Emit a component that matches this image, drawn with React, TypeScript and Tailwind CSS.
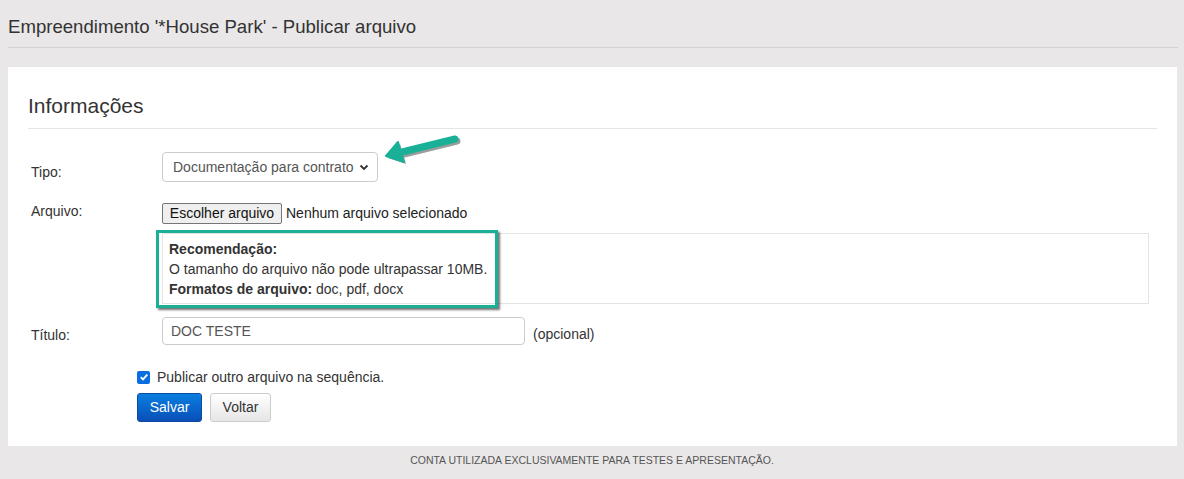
import React from "react";

const font = { fontFamily: '"Liberation Sans", Arial, sans-serif' };

function Row({ label, labelClass, children }: { label: string; labelClass?: string; children: React.ReactNode }) {
  return (
    <div className="flex">
      <div className={`w-[134px] shrink-0 pl-[3px] text-[14px] text-[#333] ${labelClass ?? ""}`}>{label}</div>
      <div className="flex-1 min-w-0">{children}</div>
    </div>
  );
}

function Arrow() {
  return (
    <svg className="absolute left-[380px] top-[128px]" width="90" height="45" viewBox="0 0 90 45">
      <g opacity="0.45" transform="translate(2 2)">
        <line x1="75" y1="11" x2="18" y2="25" stroke="#1f2b28" strokeWidth="7" strokeLinecap="round" />
        <polygon points="6,28 18,14 24,34" fill="#1f2b28" strokeLinejoin="round" />
      </g>
      <line x1="75" y1="11" x2="18" y2="25" stroke="#19b097" strokeWidth="7" strokeLinecap="round" />
      <polygon points="6,28 18,14 24,34" fill="#19b097" stroke="#19b097" strokeWidth="2" strokeLinejoin="round" />
    </svg>
  );
}

export default function App() {
  return (
    <div className="relative min-h-[479px] bg-[#e9e7e8] text-[#333]" style={font}>
      {/* Page title */}
      <div className="mx-2 mr-[6px] border-b border-[#d3d1d2] pt-[15px] pb-[8px]">
        <h1 className="text-[18.6px] leading-[24px] text-[#333]">Empreendimento '*House Park' - Publicar arquivo</h1>
      </div>

      {/* Panel */}
      <div className="ml-2 mr-[7px] mt-[19px] bg-white px-5 pt-[24px] pb-[24px]">
        <h2 className="border-b border-[#e5e5e5] pb-[7px] text-[21px] leading-[30px] text-[#333]">Informações</h2>

        <div className="mt-[23px]">
          <Row label="Tipo:" labelClass="pt-[10px]">
            <div className="flex h-[30px] w-[216px] items-center justify-between rounded-[4px] border border-[#ccc] bg-white pl-[10px] pr-[8px] text-[14px] text-[#555]">
              <span>Documentação para contrato</span>
              <svg width="10" height="10" viewBox="0 0 10 10">
                <path d="M1.5 3.5 L5 7 L8.5 3.5" fill="none" stroke="#333" strokeWidth="1.8" />
              </svg>
            </div>
          </Row>
        </div>

        <div className="mt-[20px]">
          <Row label="Arquivo:" labelClass="leading-[16px]">
            <div className="flex items-center gap-[4px] text-[14px] text-[#222]">
              <span className="flex h-[21px] w-[120px] items-center justify-center rounded-[2px] border border-[#767676] bg-[#efefef] text-[#111]">
                Escolher arquivo
              </span>
              <span>Nenhum arquivo selecionado</span>
            </div>
            <div className="relative mt-[9px] mr-[8px] border border-[#e3e3e3] px-[6px] pt-[5px] pb-[4px] text-[14px] leading-[20px] text-[#333]">
              <div className="font-bold">Recomendação:</div>
              <div>O tamanho do arquivo não pode ultrapassar 10MB.</div>
              <div>
                <span className="font-bold">Formatos de arquivo:</span> doc, pdf, docx
              </div>
              <div className="pointer-events-none absolute left-[-7px] top-[-4px] h-[78px] w-[342px] border-[3px] border-[#19b097] shadow-[2px_2px_2px_rgba(0,0,0,0.55)]" />
            </div>
          </Row>
        </div>

        <div className="mt-[13px]">
          <Row label="Título:" labelClass="pt-[8px]">
            <div className="flex items-center gap-2">
              <div className="flex h-[28px] w-[363px] items-center rounded-[4px] border border-[#ccc] bg-white px-[8px] text-[14px] text-[#555]">
                DOC TESTE
              </div>
              <span className="pt-[6px] text-[14px] leading-[20px] text-[#333]">(opcional)</span>
            </div>
          </Row>
        </div>

        <div className="ml-[109px] mt-[21px]">
          <label className="flex items-center gap-[7px] text-[14px] leading-[20px] text-[#333]">
            <span className="flex h-[13px] w-[13px] items-center justify-center rounded-[2px] bg-[#0b6ee0]">
              <svg width="10" height="10" viewBox="0 0 10 10">
                <path d="M1.8 5.2 L4 7.4 L8.3 2.6" fill="none" stroke="white" strokeWidth="1.8" />
              </svg>
            </span>
            Publicar outro arquivo na sequência.
          </label>
          <div className="mt-[6px] flex gap-[8px]">
            <button className="h-[29px] w-[65px] rounded-[3px] border border-[#0a4a9f] bg-gradient-to-b from-[#0b7ee0] to-[#0a4fb8] text-[14px] text-white">
              Salvar
            </button>
            <button className="h-[29px] w-[61px] rounded-[3px] border border-[#ccc] bg-gradient-to-b from-white to-[#e6e6e6] text-[14px] text-[#333]">
              Voltar
            </button>
          </div>
        </div>
      </div>

      {/* Footer */}
      <div className="pt-[7px] text-center text-[10.5px] leading-[14px] text-[#555]">
        CONTA UTILIZADA EXCLUSIVAMENTE PARA TESTES E APRESENTAÇÃO.
      </div>

      <Arrow />
    </div>
  );
}
